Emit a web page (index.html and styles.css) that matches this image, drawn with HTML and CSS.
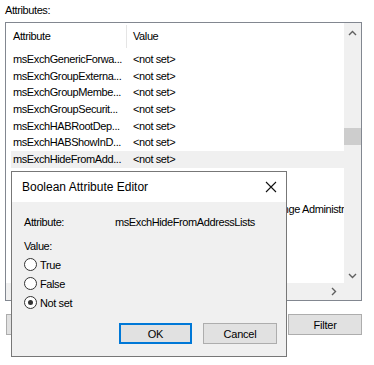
FILE: index.html
```html
<!DOCTYPE html>
<html lang="en">
<head>
    <meta charset="UTF-8" />
    <title>Attribute Editor</title>
    <link rel="stylesheet" href="styles.css">
</head>
<body>
    <div class="page">
        <div class="caption">Attributes:</div>

        <div class="listbox">
            <div class="list">
                <div class="head">
                    <div class="col-name">Attribute</div>
                    <div class="col-value">Value</div>
                </div>
                <div class="row"><div class="col-name">msExchGenericForwa...</div><div class="col-value">&lt;not set&gt;</div></div>
                <div class="row"><div class="col-name">msExchGroupExterna...</div><div class="col-value">&lt;not set&gt;</div></div>
                <div class="row"><div class="col-name">msExchGroupMembe...</div><div class="col-value">&lt;not set&gt;</div></div>
                <div class="row"><div class="col-name">msExchGroupSecurit...</div><div class="col-value">&lt;not set&gt;</div></div>
                <div class="row"><div class="col-name">msExchHABRootDep...</div><div class="col-value">&lt;not set&gt;</div></div>
                <div class="row"><div class="col-name">msExchHABShowInD...</div><div class="col-value">&lt;not set&gt;</div></div>
                <div class="row selected"><div class="col-name">msExchHideFromAdd...</div><div class="col-value">&lt;not set&gt;</div></div>
                <div class="row"><div class="col-name">msExchHomeMDB</div><div class="col-value">&lt;not set&gt;</div></div>
                <div class="row"><div class="col-name">msExchHomeMTA</div><div class="col-value">&lt;not set&gt;</div></div>
                <div class="row"><div class="col-name">msExchHomeServerN...</div><div class="col-value">/o=Acme Organization/ou=Exchange Administrative Group (FYDIBOHF23SPDLT)</div></div>
            </div>
            <div class="vscroll">
                <svg class="arrow" width="9" height="6" viewBox="0 0 9 6"><path d="M1 5 L4.5 1.5 L8 5" fill="none" stroke="#606060" stroke-width="1.4"/></svg>
                <div class="thumb"></div>
                <svg class="arrow down" width="9" height="6" viewBox="0 0 9 6"><path d="M1 1 L4.5 4.5 L8 1" fill="none" stroke="#606060" stroke-width="1.4"/></svg>
            </div>
            <div class="hscroll">
                <svg class="arrow" width="6" height="9" viewBox="0 0 6 9"><path d="M5 1 L1.5 4.5 L5 8" fill="none" stroke="#606060" stroke-width="1.4"/></svg>
                <svg class="arrow" width="6" height="9" viewBox="0 0 6 9"><path d="M1 1 L4.5 4.5 L1 8" fill="none" stroke="#606060" stroke-width="1.4"/></svg>
            </div>
            <div class="corner"></div>
        </div>

        <div class="actions">
            <button class="btn">Edit</button>
            <button class="btn">Filter</button>
        </div>

        <div class="dialog">
            <div class="title-bar">
                <span>Boolean Attribute Editor</span>
                <svg width="12" height="12" viewBox="0 0 12 12"><path d="M1 1 L11 11 M11 1 L1 11" stroke="#111" stroke-width="1.1"/></svg>
            </div>
            <div class="dialog-body">
                <div class="field">
                    <span class="field-label">Attribute:</span>
                    <span>msExchHideFromAddressLists</span>
                </div>
                <div class="value-label">Value:</div>
                <label class="radio"><span class="dot"></span>True</label>
                <label class="radio"><span class="dot"></span>False</label>
                <label class="radio"><span class="dot checked"></span>Not set</label>
                <div class="dialog-buttons">
                    <button class="btn ok">OK</button>
                    <button class="btn">Cancel</button>
                </div>
            </div>
        </div>
    </div>
</body>
</html>
```

FILE: styles.css
```css
body { margin: 0; background: #fff; font-family: "Liberation Sans", Arial, sans-serif; font-size: 11px; letter-spacing: -0.4px; color: #000; }
.page { position: relative; width: 374px; height: 365px; overflow: hidden; }
.caption { padding: 4px 0 0 5px; height: 22px; line-height: 13px; box-sizing: border-box; }

.listbox { margin-left: 5px; width: 357px; height: 279px; box-sizing: border-box; border: 1px solid #828790; display: grid; grid-template-columns: 1fr 17px; grid-template-rows: 1fr 17px; }
.list { overflow: hidden; background: #fff; }
.head { display: flex; height: 28px; align-items: flex-start; padding-top: 2px; box-sizing: border-box; line-height: 22px; }
.head .col-value { border-left: 1px solid #e5e5e5; height: 23px; padding-left: 6px; }
.row { display: flex; height: 16.67px; line-height: 16px; margin-left: 5px; white-space: nowrap; }
.row.selected { background: #f0f0f0; }
.col-name { width: 113px; flex: none; padding-left: 2px; overflow: hidden; }
.head .col-name { width: 113px; padding-left: 7px; }
.row .col-value { padding-left: 7px; overflow: hidden; flex: 1; }

.vscroll { background: #f0f0f0; display: flex; flex-direction: column; align-items: center; }
.vscroll .arrow { margin-top: 7px; }
.vscroll .thumb { width: 17px; height: 17px; background: #cdcdcd; margin-top: 92px; }
.vscroll .arrow.down { margin-top: auto; margin-bottom: 4px; }
.hscroll { background: #f0f0f0; display: flex; align-items: center; justify-content: space-between; padding: 0 7px 0 5px; }
.corner { background: #f0f0f0; }

.actions { display: flex; justify-content: space-between; margin: 13px 0 0 6px; width: 356px; }
.btn { font-family: inherit; font-size: 11px; letter-spacing: -0.2px; height: 21px; width: 74px; background: #e1e1e1; border: 1px solid #adadad; padding: 0; color: #000; }

.dialog { position: absolute; left: 11px; top: 171px; width: 276px; height: 186px; box-sizing: border-box; border: 1px solid #777; background: #f0f0f0; display: flex; flex-direction: column; }
.title-bar { height: 30px; background: #fff; display: flex; align-items: center; justify-content: space-between; padding: 0 9px 0 10px; font-size: 12px; letter-spacing: 0; flex: none; }
.dialog-body { padding: 13px 0 0 12px; display: flex; flex-direction: column; flex: 1; }
.field { display: flex; line-height: 14px; }
.field-label { width: 91px; }
.value-label { margin-top: 10px; line-height: 14px; }
.radio { display: flex; align-items: center; height: 19px; gap: 3px; }
.radio:first-of-type { margin-top: 2px; }
.dot { width: 11px; height: 11px; border: 1px solid #333; border-radius: 50%; background: #fff; position: relative; }
.dot.checked::after { content: ""; position: absolute; left: 3px; top: 3px; width: 5px; height: 5px; border-radius: 50%; background: #333; }
.dialog-buttons { display: flex; gap: 11px; margin: auto 0 12px 95px; }
.ok { border: 2px solid #0078d7; width: 73px; }
```
